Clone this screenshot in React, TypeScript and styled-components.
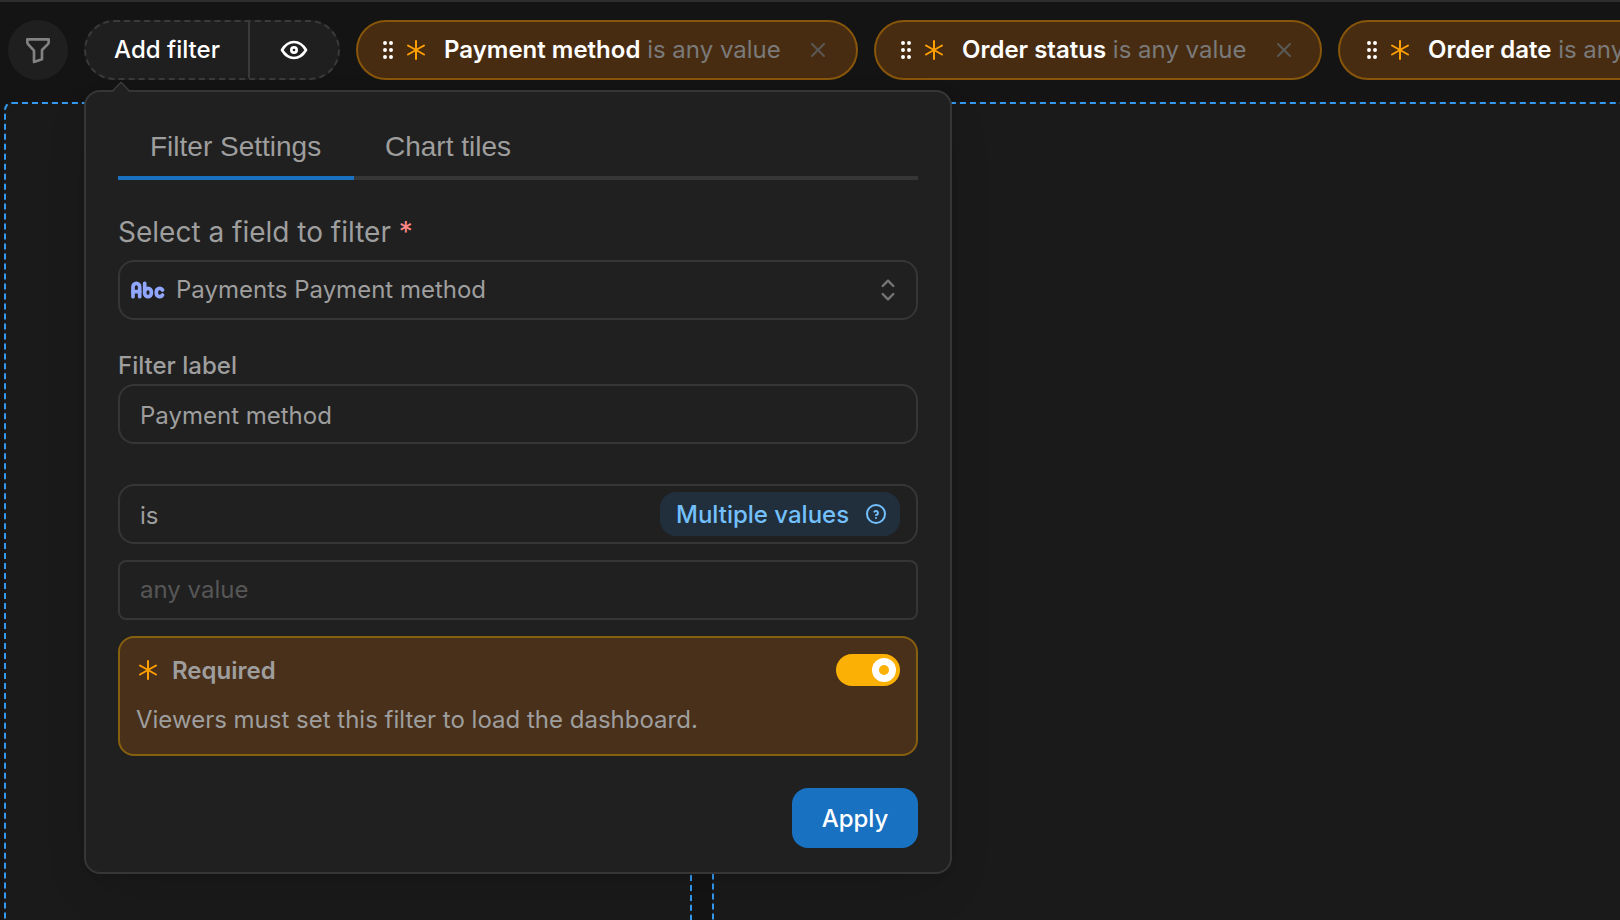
import React from 'react';
import styled, { createGlobalStyle } from 'styled-components';

const GlobalStyle = createGlobalStyle`
  *, *::before, *::after { box-sizing: border-box; }
  html, body { margin: 0; padding: 0; background: #141414; overflow: hidden; }
  body { font-family: Inter, "Liberation Sans", sans-serif; font-size: 24px; color: #9e9e9e; }
  button, input { font: inherit; color: inherit; }
`;

const Page = styled.div`
  position: relative;
  display: flex;
  flex-direction: column;
  width: 1620px;
  height: 920px;
  overflow: hidden;
  border-top: 2px solid #2e2e2e;
`;

const FilterBar = styled.header`
  display: flex;
  flex: none;
  gap: 16px;
  height: 100px;
  padding: 18px 0 0 8px;
`;

const RoundButton = styled.button`
  display: flex;
  align-items: center;
  justify-content: center;
  flex: none;
  width: 60px;
  height: 60px;
  padding: 0;
  border: 0;
  border-radius: 50%;
  background: #1f1f1f;
  color: #828282;
`;

const ButtonGroup = styled.div`
  display: flex;
  flex: none;
  width: 256px;
  height: 60px;
  border: 2px dashed #3a3a3a;
  border-radius: 30px;
  background: #1f1f1f;
  color: #fff;
`;

const GroupButton = styled.button<{ $divided?: boolean }>`
  display: flex;
  align-items: center;
  justify-content: center;
  flex: ${(p) => (p.$divided ? '0 0 164px' : '1')};
  padding: 0;
  border: 0;
  border-right: ${(p) => (p.$divided ? '2px solid #3a3a3a' : '0')};
  background: none;
  font-weight: 500;
  line-height: 56px;
`;

const Pill = styled.div<{ $width: number; $start: number; $end: number }>`
  display: flex;
  align-items: center;
  flex: none;
  width: ${(p) => p.$width}px;
  height: 60px;
  padding: 0 ${(p) => p.$end}px 0 ${(p) => p.$start}px;
  border: 2px solid #87560b;
  border-radius: 30px;
  background: #482c11;
  color: #7a7a7a;
  white-space: pre;
`;

const PillText = styled.span`
  flex: 1;
  margin-left: 16px;
  line-height: 56px;
`;

const PillName = styled.strong`
  color: #fff;
  font-weight: 600;
`;

const Icon = styled.svg<{ $size: number; $color?: string }>`
  display: block;
  flex: none;
  width: ${(p) => p.$size}px;
  height: ${(p) => p.$size}px;
  fill: none;
  stroke: ${(p) => p.$color ?? 'currentColor'};
  stroke-linecap: round;
  stroke-linejoin: round;
`;

const PillStar = styled.span`
  display: flex;
  margin-left: 4px;
`;

const Tiles = styled.main`
  display: flex;
  flex: 1;
  gap: 20px;
  padding-left: 4px;
`;

const Tile = styled.section<{ $width: number }>`
  flex: none;
  width: ${(p) => p.$width}px;
  height: 1000px;
  border: 2px dashed #339af0;
  border-radius: 8px;
  background: #1a1a1a;
`;

const Popover = styled.div`
  position: absolute;
  left: 84px;
  top: 88px;
  display: flex;
  flex-direction: column;
  width: 868px;
  height: 784px;
  padding: 20px 32px 24px;
  border: 2px solid #363636;
  border-radius: 16px;
  background: #202020;
  box-shadow: 0 2px 6px rgba(0, 0, 0, 0.08), 0 20px 50px -10px rgba(0, 0, 0, 0.14);
`;

const Arrow = styled.span`
  position: absolute;
  left: 28px;
  top: -8px;
  width: 14px;
  height: 14px;
  transform: rotate(45deg);
  border: 2px solid #363636;
  border-right: 0;
  border-bottom: 0;
  border-top-left-radius: 1px;
  background: linear-gradient(135deg, #202020 60%, transparent 60%);
`;

const Tabs = styled.nav`
  display: flex;
  height: 68px;
  border-bottom: 4px solid #363636;
  font-family: "Liberation Sans", Arial, sans-serif;
  font-size: 28px;
`;

const Tab = styled.div<{ $active?: boolean }>`
  height: 68px;
  min-width: ${(p) => (p.$active ? 236 : 0)}px;
  padding: 1px 32px 0 ${(p) => (p.$active ? 32 : 31)}px;
  line-height: 68px;
  border-bottom: 4px solid ${(p) => (p.$active ? '#1971c2' : 'transparent')};
  white-space: nowrap;
`;

const Label = styled.label<{ $large?: boolean }>`
  display: block;
  margin-top: ${(p) => (p.$large ? '32px' : '30px')};
  height: ${(p) => (p.$large ? '48px' : '34px')};
  line-height: ${(p) => (p.$large ? '41px' : '32px')};
  font-size: ${(p) => (p.$large ? '28px' : '24px')};
  font-weight: ${(p) => (p.$large ? 400 : 500)};
`;

const Star = styled.span`
  color: #ff8787;
`;

const Field = styled.div<{ $radius?: number; $gap?: number; $icon?: boolean; $muted?: boolean }>`
  display: flex;
  align-items: center;
  flex: none;
  height: 60px;
  margin-top: ${(p) => p.$gap ?? 0}px;
  padding: ${(p) => (p.$icon ? '0 12px 0 8px' : '0 16px 0 20px')};
  border: 2px solid #363636;
  border-radius: ${(p) => p.$radius ?? 16}px;
  color: ${(p) => (p.$muted ? '#565656' : '#9e9e9e')};
`;

const FieldText = styled.span<{ $indent?: number; $raised?: boolean }>`
  flex: 1;
  padding-left: ${(p) => p.$indent ?? 0}px;
  padding-top: ${(p) => (p.$raised ? 0 : 2)}px;
  padding-bottom: ${(p) => (p.$raised ? 1 : 0)}px;
`;

const Badge = styled.span`
  display: flex;
  align-items: center;
  justify-content: space-between;
  width: 240px;
  height: 44px;
  padding: 0 12px 0 16px;
  border-radius: 16px;
  background: #212f3d;
  color: #74c0fc;
  font-weight: 500;
`;

const RequiredCard = styled.section`
  flex: none;
  height: 120px;
  margin-top: 16px;
  padding: 16px 16px 0;
  border: 2px solid #87600f;
  border-radius: 16px;
  background: #49301a;
`;

const RequiredHead = styled.div`
  display: flex;
  align-items: center;
  height: 32px;
  font-weight: 600;
`;

const RequiredTitle = styled.span`
  flex: 1;
  margin-left: 12px;
`;

const RequiredNote = styled.p`
  margin: 15px 0 0;
  line-height: 38px;
`;

const Switch = styled.span`
  display: flex;
  align-items: center;
  justify-content: flex-end;
  width: 64px;
  height: 32px;
  padding: 4px;
  border-radius: 16px;
  background: #fab005;
`;

const Thumb = styled.span`
  width: 24px;
  height: 24px;
  border: 7px solid #fff;
  border-radius: 50%;
`;

const Apply = styled.button`
  align-self: flex-end;
  width: 126px;
  height: 60px;
  margin-top: 32px;
  padding: 0;
  border: 0;
  border-radius: 16px;
  background: #1971c2;
  color: #fff;
  font-weight: 500;
`;

type GlyphProps = { size: number; paths: string[]; color?: string; weight?: number };

const Glyph = ({ size, paths, color, weight = 2 }: GlyphProps) => (
  <Icon viewBox="0 0 24 24" $size={size} $color={color} strokeWidth={weight}>
    {paths.map((d) => (
      <path key={d} d={d} />
    ))}
  </Icon>
);

const FUNNEL = [
  'M4 4h16v2.172a2 2 0 0 1 -.586 1.414l-4.414 4.414v7l-6 2v-8.5l-4.48 -4.928a2 2 0 0 1 -.52 -1.345v-2.227z',
];
const EYE = [
  'M10 12a2 2 0 1 0 4 0a2 2 0 0 0 -4 0',
  'M21 12c-2.4 4 -5.4 6 -9 6c-3.6 0 -6.6 -2 -9 -6c2.4 -4 5.4 -6 9 -6c3.6 0 6.6 2 9 6',
];
const GRIP = [9, 15].flatMap((x) => [5, 12, 19].map((y) => `M${x - 1} ${y}a1 1 0 1 0 2 0a1 1 0 1 0 -2 0`));
const ASTERISK = ['M12 12l8 -4.5', 'M12 12v9', 'M12 12l-8 -4.5', 'M12 12l8 4.5', 'M12 3v9', 'M12 12l-8 4.5'];
const CROSS = ['M18 6l-12 12', 'M6 6l12 12'];
const ABC = [
  'M3 16v-6a2 2 0 1 1 4 0v6',
  'M3 13h4',
  'M10 8v6a2 2 0 1 0 4 0v-1a2 2 0 1 0 -4 0v1',
  'M20.732 12a2 2 0 0 0 -3.732 1v1a2 2 0 0 0 3.726 1.01',
];
const SELECTOR = ['M8 9l4 -4l4 4', 'M16 15l-4 4l-4 -4'];
const HELP = [
  'M3 12a9 9 0 1 0 18 0a9 9 0 1 0 -18 0',
  'M12 16v.01',
  'M12 13a2 2 0 0 0 .914 -3.782a1.98 1.98 0 0 0 -2.414 .483',
];

const FILTERS = [
  { name: 'Payment method', width: 502, start: 18, end: 26 },
  { name: 'Order status', width: 448, start: 18, end: 24 },
  { name: 'Order date', width: 434, start: 20, end: 26 },
];

type FilterPillProps = { name: string; width: number; start: number; end: number };

const FilterPill = ({ name, width, start, end }: FilterPillProps) => (
  <Pill $width={width} $start={start} $end={end}>
    <Glyph size={24} paths={GRIP} color="#fff" />
    <PillStar>
      <Glyph size={24} paths={ASTERISK} color="#ff9f00" />
    </PillStar>
    <PillText>
      <PillName>{name}</PillName> is any value
    </PillText>
    <Glyph size={24} paths={CROSS} color="#5a5855" weight={2} />
  </Pill>
);

export default function App() {
  return (
    <>
      <GlobalStyle />
      <Page>
        <FilterBar>
          <RoundButton aria-label="Filters">
            <Glyph size={32} paths={FUNNEL} />
          </RoundButton>
          <ButtonGroup>
            <GroupButton $divided>Add filter</GroupButton>
            <GroupButton aria-label="Preview">
              <Glyph size={32} paths={EYE} />
            </GroupButton>
          </ButtonGroup>
          {FILTERS.map((f) => (
            <FilterPill key={f.name} {...f} />
          ))}
        </FilterBar>
        <Tiles>
          <Tile $width={688} />
          <Tile $width={1000} />
        </Tiles>
        <Popover>
          <Arrow />
          <Tabs>
            <Tab $active>Filter Settings</Tab>
            <Tab>Chart tiles</Tab>
          </Tabs>
          <Label $large>
            Select a field to filter <Star>*</Star>
          </Label>
          <Field $icon>
            <Glyph size={40} paths={ABC} color="#91a7ff" weight={2.2} />
            <FieldText $indent={8} $raised>Payments Payment method</FieldText>
            <Glyph size={32} paths={SELECTOR} color="#757575" weight={1.8} />
          </Field>
          <Label>Filter label</Label>
          <Field>
            <FieldText>Payment method</FieldText>
          </Field>
          <Field $gap={40}>
            <FieldText>is</FieldText>
            <Badge>
              Multiple values
              <Glyph size={24} paths={HELP} />
            </Badge>
          </Field>
          <Field $gap={16} $radius={8} $muted>
            <FieldText $raised>any value</FieldText>
          </Field>
          <RequiredCard>
            <RequiredHead>
              <Glyph size={24} paths={ASTERISK} color="#ff9f00" />
              <RequiredTitle>Required</RequiredTitle>
              <Switch>
                <Thumb />
              </Switch>
            </RequiredHead>
            <RequiredNote>Viewers must set this filter to load the dashboard.</RequiredNote>
          </RequiredCard>
          <Apply>Apply</Apply>
        </Popover>
      </Page>
    </>
  );
}
